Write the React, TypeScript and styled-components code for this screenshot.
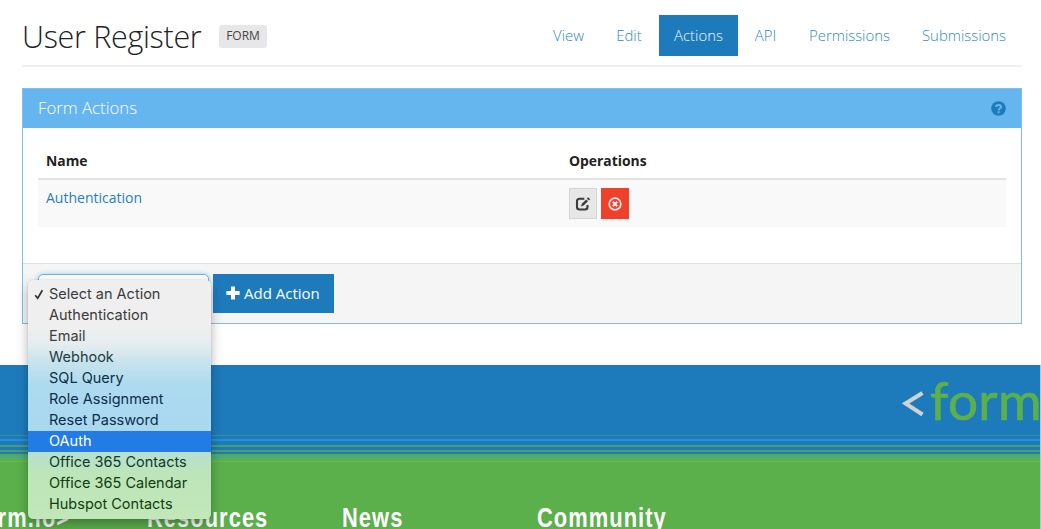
import React from "react";
import styled, { createGlobalStyle } from "styled-components";

const Global = createGlobalStyle`
  * { box-sizing: border-box; }
  html, body { margin: 0; padding: 0; }
  body { background: #fff; font-family: "Open Sans", "Noto Sans", sans-serif; color: #222; }
`;

const Page = styled.div`
  position: relative;
  width: 1041px;
  height: 529px;
  overflow: hidden;
`;
const Container = styled.main`
  width: 1000px;
  margin-left: 22px;
  height: 365px;
`;
const Header = styled.header`
  display: flex;
  height: 67px;
  padding-top: 15px;
  border-bottom: 2px solid #f0f0f0;
`;
const Title = styled.h1`
  margin: 0;
  font-size: 30.5px;
  letter-spacing: -0.3px;
  line-height: 42px;
  font-weight: 300;
  white-space: nowrap;
  width: 197px;
`;
const Tag = styled.span`
  width: 48px;
  height: 23px;
  margin-top: 10px;
  border-radius: 3px;
  background: #e7e7e7;
  color: #444;
  font-size: 12px;
  line-height: 22px;
  text-align: center;
`;
const Nav = styled.nav`
  display: flex;
  margin-left: auto;
`;
const Tab = styled.a<{ $active?: boolean; $width: number }>`
  width: ${(p) => p.$width}px;
  height: 41px;
  line-height: 41px;
  text-align: center;
  font-size: 14.9px;
  font-weight: 350;
  color: ${(p) => (p.$active ? "#f2f9ff" : "#3089c6")};
  background: ${(p) => (p.$active ? "#1d7bbc" : "transparent")};
`;
const Panel = styled.section`
  margin-top: 21px;
  height: 236px;
  border: 1px solid #7cc0f0;
  display: flex;
  flex-direction: column;
`;
const PanelHeading = styled.div`
  height: 39px;
  flex: none;
  background: #65b6ee;
  color: #fff;
  font-size: 16.8px;
  font-weight: 350;
  line-height: 38px;
  padding: 0 15px;
  display: flex;
  justify-content: space-between;
`;
const HelpIcon = styled.svg`
  margin-top: 12px;
`;
const PanelBody = styled.div`
  flex: 1;
  padding: 14px 15px 0;
`;
const HeadRow = styled.div`
  display: grid;
  grid-template-columns: 523px 1fr;
  height: 38px;
  padding: 0 8px;
  border-bottom: 2px solid #e2e2e2;
  font-size: 13.9px;
  font-weight: 700;
  line-height: 38px;
`;
const Row = styled.div`
  display: grid;
  grid-template-columns: 523px 1fr;
  height: 47px;
  padding: 8px;
  background: #f9f9f9;
  font-size: 14px;
`;
const Link = styled.a`
  color: #2580bd;
  line-height: 20px;
`;
const Ops = styled.div`
  display: flex;
  gap: 4px;
`;
const IconButton = styled.button<{ $danger?: boolean }>`
  display: flex;
  align-items: center;
  justify-content: center;
  width: 28px;
  height: 31px;
  padding: 0;
  border: 1px solid ${(p) => (p.$danger ? "#ef402c" : "#d5d5d5")};
  background: ${(p) => (p.$danger ? "#ef402c" : "#e7e7e7")};
`;
const PanelFooter = styled.div`
  display: flex;
  gap: 4px;
  height: 60px;
  padding: 10px 15px;
  border-top: 1px solid #e0e0e0;
  background: #f5f5f5;
`;
const Select = styled.div`
  width: 171px;
  height: 39px;
  border: 1px solid #66b5ee;
  border-radius: 5px;
  background: #fff;
  box-shadow: 0 0 5px rgba(102, 175, 233, 0.6);
`;
const AddButton = styled.button`
  display: flex;
  align-items: center;
  gap: 4px;
  width: 121px;
  height: 39px;
  padding: 0 0 1px 13px;
  border: 0;
  background: #1d7bbc;
  color: #fff;
  font: 400 15px "Open Sans", sans-serif;
  white-space: nowrap;
`;
const Footer = styled.footer`
  width: 1041px;
  border-right: 1px solid #a9cbd8;
`;
const Band = styled.div`
  display: flex;
  justify-content: flex-end;
  height: 70px;
  background: #1d7bbc;
  overflow: hidden;
`;
const Logo = styled.div`
  display: flex;
  width: 138px;
  font-family: Lato, sans-serif;
  white-space: nowrap;
`;
const Bracket = styled.svg`
  flex: none;
  margin-top: 25px;
`;
const LogoText = styled.span`
  font-size: 53px;
  line-height: 64px;
  margin-left: 5px;
  margin-top: 3px;
  letter-spacing: 0.3px;
  color: #5bb04c;
  -webkit-text-stroke: 0.7px #5bb04c;
`;
const Stripe = styled.div<{ $h: number; $c: string }>`
  height: ${(p) => p.$h}px;
  background: ${(p) => p.$c};
`;
const Columns = styled.div`
  display: grid;
  grid-template-columns: 186px repeat(2, 195px) 1fr;
  height: 68px;
  padding-top: 39px;
  margin-left: -39px;
  background: #5bb04c;
`;
const ColumnTitle = styled.h3`
  margin: 0;
  color: #fff;
  font: 700 27px/34px "Liberation Sans", Arial, sans-serif;
  letter-spacing: 1.3px;
  white-space: nowrap;
  transform: scaleX(0.81);
  transform-origin: left;
`;
const Menu = styled.ul`
  position: absolute;
  left: 28px;
  top: 280px;
  width: 183px;
  height: 239px;
  margin: 0;
  padding: 4px 0;
  list-style: none;
  border-radius: 5px;
  background: linear-gradient(#efefef 0, #efefef 48px, #e5edef 64px, #c5e2ed 84px, #addaef 105px, #a9d8ef 150px, #b5e0d0 172px, #bce5b9 192px, #c2e7b8 239px);
  box-shadow: 0 0 1px rgba(0, 0, 0, 0.35), 0 5px 12px rgba(0, 0, 0, 0.3);
  font-family: Inter, sans-serif;
  font-size: 14.5px;
`;
const Option = styled.li<{ $on?: boolean; $color: string }>`
  display: flex;
  align-items: center;
  height: 21px;
  line-height: 20px;
  padding-bottom: 1px;
  color: ${(p) => p.$color};
  background: ${(p) => (p.$on ? "#237be6" : "transparent")};
  white-space: nowrap;
`;
const Mark = styled.span`
  display: flex;
  justify-content: center;
  width: 21px;
  flex: none;
`;

const tabs = [
  { label: "View", width: 61 },
  { label: "Edit", width: 60 },
  { label: "Actions", width: 79, active: true },
  { label: "API", width: 55 },
  { label: "Permissions", width: 113 },
  { label: "Submissions", width: 116 },
];
const options = [
  ["Select an Action", "#3b3b3b"],
  ["Authentication", "#3b3b3b"],
  ["Email", "#3a3d3e"],
  ["Webhook", "#203a42"],
  ["SQL Query", "#0c3045"],
  ["Role Assignment", "#0b2f4a"],
  ["Reset Password", "#0b2f4a"],
  ["OAuth", "#ffffff"],
  ["Office 365 Contacts", "#0d3b27"],
  ["Office 365 Calendar", "#103d10"],
  ["Hubspot Contacts", "#103d10"],
];
const stripes: [number, string][] = [
  [1, "#3c8f98"], [3, "#1d7bbc"], [2, "#2691d7"], [4, "#1d7bbc"], [2, "#4a9f6c"], [3, "#1d7bbc"],
  [2, "#4a9f6c"], [2, "#1d7bbc"], [2, "#55aa50"], [2, "#42ab91"], [3, "#5bb04c"], [1, "#67b657"],
];

export default function App() {
  return (
    <Page>
      <Global />
      <Container>
        <Header>
          <Title>User Register</Title>
          <Tag>FORM</Tag>
          <Nav>
            {tabs.map((t) => (
              <Tab key={t.label} $width={t.width} $active={t.active}>{t.label}</Tab>
            ))}
          </Nav>
        </Header>
        <Panel>
          <PanelHeading>
            Form Actions
            <HelpIcon width="15" height="15" viewBox="0 0 15 15">
              <circle cx="7.5" cy="7.5" r="7.3" fill="#1d7bbc" />
              <path d="M5 5.8C5.2 3.3 10 3.2 10 5.9C10 7.6 7.7 7.4 7.7 9.2" fill="none" stroke="#65b6ee" strokeWidth="2" />
              <rect x="6.6" y="10.2" width="2.1" height="2" fill="#65b6ee" />
            </HelpIcon>
          </PanelHeading>
          <PanelBody>
            <HeadRow><span>Name</span><span>Operations</span></HeadRow>
            <Row>
              <Link>Authentication</Link>
              <Ops>
                <IconButton aria-label="Edit">
                  <svg width="16" height="16" viewBox="0 0 16 16" fill="none" stroke="#3c3c3c">
                    <path d="M9.3 2.8H4.5Q2 2.8 2 5.3V11Q2 13.5 4.5 13.5H10Q12.5 13.5 12.5 11V9" strokeWidth="2.1" />
                    <path d="M6 10.6L6.8 7.8L11.2 3.4L13 5.2L8.6 9.6Z" fill="#3c3c3c" stroke="none" />
                    <path d="M12.5 1.9L14.5 3.9" strokeWidth="1.8" />
                  </svg>
                </IconButton>
                <IconButton $danger aria-label="Delete">
                  <svg width="14" height="14" viewBox="0 0 14 14" fill="none" stroke="#ffe9e6">
                    <circle cx="7" cy="7" r="5.8" strokeWidth="1.7" />
                    <path d="M4.8 4.8L9.2 9.2M9.2 4.8L4.8 9.2" strokeWidth="2" />
                  </svg>
                </IconButton>
              </Ops>
            </Row>
          </PanelBody>
          <PanelFooter>
            <Select />
            <AddButton>
              <svg width="14" height="14" viewBox="0 0 14 14"><path d="M5 0.5H9V5H13.6V9H9V13.5H5V9H0.4V5H5Z" fill="#fff" /></svg>
              Add Action
            </AddButton>
          </PanelFooter>
        </Panel>
      </Container>
      <Footer>
        <Band>
          <Logo>
            <Bracket width="23" height="28" viewBox="0 0 23 28"><path d="M20.5 3L3.5 13.5L20.5 24.5" fill="none" stroke="#cfd2d4" strokeWidth="4" /></Bracket>
            <LogoText>form</LogoText>
          </Logo>
        </Band>
        {stripes.map(([h, c], i) => <Stripe key={i} $h={h} $c={c} />)}
        <Columns>
          <ColumnTitle>&lt;form.io&gt;</ColumnTitle>
          <ColumnTitle>Resources</ColumnTitle>
          <ColumnTitle>News</ColumnTitle>
          <ColumnTitle>Community</ColumnTitle>
        </Columns>
      </Footer>
      <Menu>
        {options.map(([label, color]) => (
          <Option key={label} $color={color} $on={label === "OAuth"}>
            <Mark>
              {label === "Select an Action" && (
                <svg width="10" height="11" viewBox="0 0 10 11"><path d="M1.2 6.2L3.7 9.3L8.4 1.2" fill="none" stroke="#333" strokeWidth="1.7" /></svg>
              )}
            </Mark>
            {label}
          </Option>
        ))}
      </Menu>
    </Page>
  );
}
